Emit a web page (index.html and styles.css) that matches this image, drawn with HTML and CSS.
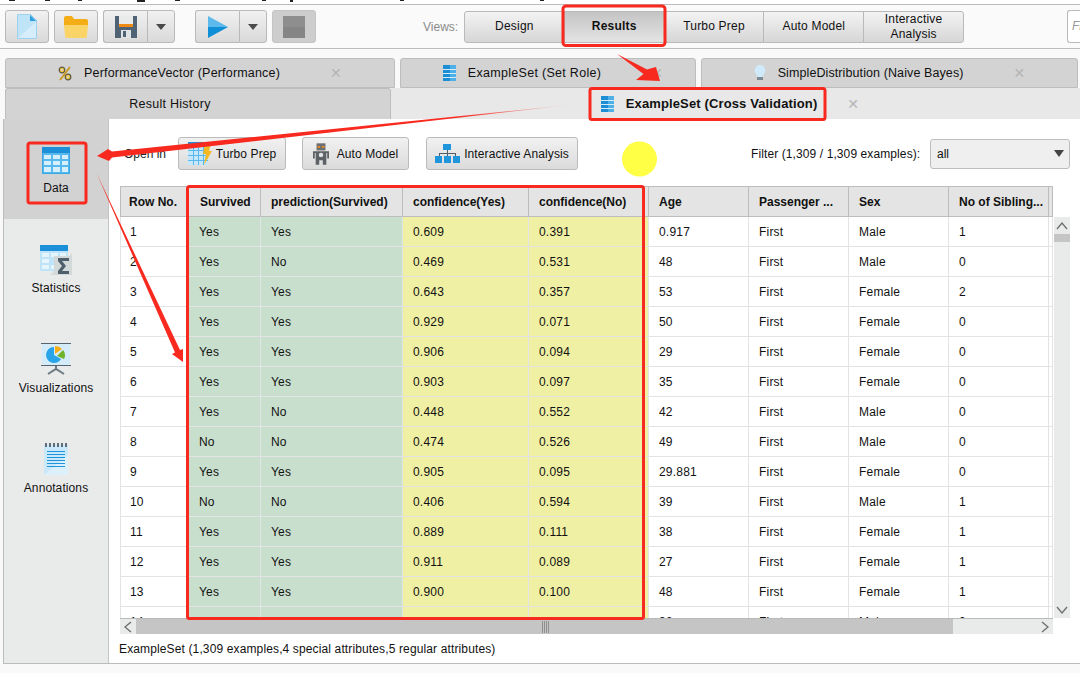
FILE: index.html
```html
<!DOCTYPE html>
<html lang="en">
<head>
<meta charset="utf-8">
<title>Results</title>
<link rel="stylesheet" href="styles.css">
</head>
<body>
<div class="page">
  <div class="menu-strip">
    <svg class="ticks" width="1080" height="2" viewBox="0 0 1080 2"><path d="M9 0h6v1H9zM45 0h5v1h-5zM78 0h4v1h-4zM137 0h8v2h-8zM175 0h5v1h-5zM262 0h4v1h-4zM290 0h3v2h-3zM400 0h4v1h-4zM540 0h4v1h-4z" fill="#222"/></svg>
  </div>
  <header class="toolbar">
    <button class="tool">
      <svg width="20" height="25" viewBox="0 0 20 25"><path d="M0 0h13l7 7v18H0z" fill="#bfe3f7"/><path d="M0 25L20 7v18z" fill="#d6eefb"/><path d="M13 0l7 7h-7z" fill="#2b9fe0"/><path d="M.5.5h12.3l6.7 6.7v17.3H.5z" fill="none" stroke="#9ed1ee"/></svg>
    </button>
    <button class="tool">
      <svg width="24" height="22" viewBox="0 0 24 22"><path d="M0 2a2 2 0 0 1 2-2h6l2 3h12a2 2 0 0 1 2 2v6H0z" fill="#f4ad16"/><path d="M0 9h24l-1 11a2 2 0 0 1-2 2H3a2 2 0 0 1-2-2z" fill="#fbd468"/></svg>
    </button>
    <div class="split">
      <button class="tool main-part">
        <svg width="22" height="22" viewBox="0 0 22 22"><path d="M0 0h22v22H0z" fill="#4f6375"/><path d="M4 0h14v9H4z" fill="#e9eaea"/><path d="M4 8h14v3H4z" fill="#ef8a12"/><path d="M6 14h10v8H6z" fill="#dfe3e5"/><path d="M8 15h3v6H8z" fill="#4f6375"/></svg>
      </button>
      <button class="tool caret-part"><span class="caret"></span></button>
    </div>
    <div class="split run">
      <button class="tool main-part">
        <svg width="20" height="22" viewBox="0 0 20 22"><path d="M0 0l20 11H0z" fill="#5cb9ec"/><path d="M0 22l20-11H0z" fill="#0f8fd8"/></svg>
      </button>
      <button class="tool caret-part"><span class="caret"></span></button>
    </div>
    <button class="tool stop">
      <svg width="22" height="22" viewBox="0 0 22 22"><path d="M0 0h22v11H0z" fill="#8e8e8e"/><path d="M0 11h22v11H0z" fill="#858585"/></svg>
    </button>
    <span class="views-label">Views:</span>
    <nav class="views">
      <button class="view">Design</button>
      <button class="view active">Results</button>
      <button class="view">Turbo Prep</button>
      <button class="view">Auto Model</button>
      <button class="view">Interactive<br>Analysis</button>
    </nav>
    <div class="find">Fi</div>
  </header>

  <div class="tabs-top">
    <div class="tab t1">
      <svg class="tab-icon" width="14" height="15" viewBox="0 0 14 15"><circle cx="4" cy="4" r="2.800" fill="#f0c64a" stroke="#5f5a3c" stroke-width="1.200"/><circle cx="10" cy="11" r="2.800" fill="#f0c64a" stroke="#5f5a3c" stroke-width="1.200"/><circle cx="4" cy="4" r="1" fill="#d3d3d3"/><circle cx="10" cy="11" r="1" fill="#d3d3d3"/><path d="M2 14L12 1" stroke="#c8961a" stroke-width="1.800"/></svg>
      <span>PerformanceVector (Performance)</span>
      <span class="close">✕</span>
    </div>
    <div class="tab t2">
      <svg class="tab-icon" width="13" height="16" viewBox="0 0 13 16"><path d="M0 0h13v16H0z" fill="#1c8ed6"/><path d="M7 0h6v16H7z" fill="#4fb0e8"/><path d="M0 4h13v1H0zM0 8h13v1H0zM0 12h13v1H0z" fill="#d6edf9"/></svg>
      <span>ExampleSet (Set Role)</span>
      <span class="close">✕</span>
    </div>
    <div class="tab t3">
      <svg class="tab-icon" width="12" height="16" viewBox="0 0 12 16"><path d="M6 0a5.500 5.500 0 0 1 3 10v2H3v-2A5.500 5.500 0 0 1 6 0z" fill="#cfeafa"/><path d="M3 12h6v3H3z" fill="#7d8a94"/></svg>
      <span>SimpleDistribution (Naive Bayes)</span>
      <span class="close">✕</span>
    </div>
  </div>
  <div class="tabs-bottom">
    <div class="tab history"><span>Result History</span></div>
    <div class="tab current">
      <svg class="tab-icon" width="13" height="16" viewBox="0 0 13 16"><path d="M0 0h13v16H0z" fill="#1c8ed6"/><path d="M7 0h6v16H7z" fill="#4fb0e8"/><path d="M0 4h13v1H0zM0 8h13v1H0zM0 12h13v1H0z" fill="#d6edf9"/></svg>
      <span class="current-title">ExampleSet (Cross Validation)</span>
      <span class="close">✕</span>
    </div>
  </div>

  <div class="panel">
    <aside class="side">
      <div class="side-item selected">
        <svg width="28" height="28" viewBox="0 0 28 28"><path d="M0 0h28v27H0z" fill="#58b9ee"/><path d="M0 0h28v6H0z" fill="#1b90d8"/><path d="M2 8h7v4H2zM11 8h7v4h-7zM20 8h6v4h-6zM2 14h7v4H2zM11 14h7v4h-7zM20 14h6v4h-6zM2 20h7v5H2zM11 20h7v5h-7zM20 20h6v5h-6z" fill="#d6effc"/><path d="M0 6h1v21H0zM27 6h1v21h-1zM0 26h28v1H0z" fill="#37a7e6"/></svg>
        <span>Data</span>
      </div>
      <div class="side-item">
        <svg width="32" height="30" viewBox="0 0 32 30"><path d="M0 0h28v26H0z" fill="#bfe4f8"/><path d="M0 0h28v6H0z" fill="#1b90d8"/><path d="M2 8h7v4H2zM11 8h7v4h-7zM20 8h6v4h-6zM2 14h7v4H2zM2 20h7v4H2zM11 20h5v4h-5z" fill="#e6f5fd"/><path d="M10 30l22-22v22z" fill="#d8dcdc"/><path d="M14 11h18v19H14z" fill="#d3d8d9"/><path d="M18 13h11v3h-7l4 5-4 5h7v3H18v-3l4-5-4-5z" fill="#4f5f6c"/></svg>
        <span>Statistics</span>
      </div>
      <div class="side-item">
        <svg width="30" height="32" viewBox="0 0 30 32"><path d="M1 1h28v22H1z" fill="#d4ecfa"/><path d="M0 0h30v1H0zM0 22h30v1H0z" fill="#55646f"/><path d="M13 4a8 8 0 1 0 7 12l-7-4z" fill="#29a4e8"/><path d="M14 3a9 9 0 0 1 7 3l-7 5z" fill="#f4ad16"/><path d="M22 7a8 8 0 0 1 1 9l-7-3z" fill="#6fb32b"/><path d="M14 23h2v4h-2z" fill="#6b7880"/><path d="M7 31l8-5 8 5" fill="none" stroke="#6b7880" stroke-width="2"/></svg>
        <span>Visualizations</span>
      </div>
      <div class="side-item">
        <svg width="24" height="32" viewBox="0 0 24 32"><path d="M0 2h24v30H0z" fill="#c9e8fa"/><path d="M0 32L24 12v20z" fill="#dcf1fc"/><path d="M1 0h2v4H1zM5 0h2v4H5zM9 0h2v4H9zM13 0h2v4h-2zM17 0h2v4h-2zM21 0h2v4h-2z" fill="#5f6d78"/><path d="M3 8h18v1H3zM3 11h18v1H3zM3 14h18v1H3zM3 17h18v1H3zM3 20h18v1H3zM3 23h18v1H3z" fill="#1f95dc"/></svg>
        <span>Annotations</span>
      </div>
    </aside>

    <main class="content">
      <div class="actions">
        <span class="open-in">Open in</span>
        <button class="action a-turbo">
          <svg width="24" height="23" viewBox="0 0 24 23"><path d="M0 0h20v23H0z" fill="#c6e7fa"/><path d="M0 0h20v3H0z" fill="#1b90d8"/><path d="M0 8h20v1H0zM0 13h20v1H0zM0 18h20v1H0zM5 3h1v20H5zM10 3h1v20h-1zM15 3h1v20h-1z" fill="#5ab8ec"/><path d="M17 1h6l-2 8h3L16 23l2-11h-3z" fill="#f4b822"/></svg>
          <span>Turbo Prep</span>
        </button>
        <button class="action a-auto">
          <svg width="16" height="24" viewBox="0 0 18 24"><path d="M4 0h10v8H4z" fill="#6b6f73"/><path d="M5 3h3v2H5zM10 3h3v2h-3z" fill="#e98a1d"/><path d="M0 9h18v8h-2v-6h-1v13h-4v-5H7v5H3V11H2v6H0z" fill="#5e6266"/><circle cx="9" cy="13" r="2.500" fill="#e2e6e8"/></svg>
          <span>Auto Model</span>
        </button>
        <button class="action a-inter">
          <svg width="25" height="19" viewBox="0 0 25 19"><path d="M8 0h8v6H8zM0 12h7v7H0zM9 12h7v7H9zM18 12h7v7h-7z" fill="#1f95dc"/><path d="M12 6h1v3h8v3h-1v-2h-7v2h-1v-2H5v2H4V9h8z" fill="#4f5f6c"/></svg>
          <span>Interactive Analysis</span>
        </button>
        <span class="filter-label">Filter (1,309 / 1,309 examples):</span>
        <div class="select"><span>all</span><span class="select-caret"></span></div>
      </div>

      <div class="grid-area">
        <div class="grid-col">
          <div class="grid-clip">
            <table class="data">
              <colgroup>
                <col class="c-row"><col class="c-sur"><col class="c-pre"><col class="c-yes"><col class="c-no"><col class="c-std"><col class="c-std"><col class="c-std"><col class="c-std"><col class="c-end">
              </colgroup>
              <thead>
                <tr><th>Row No.</th><th class="pad-s">Survived</th><th>prediction(Survived)</th><th>confidence(Yes)</th><th>confidence(No)</th><th>Age</th><th>Passenger ...</th><th>Sex</th><th>No of Sibling...</th><th></th></tr>
              </thead>
              <tbody>
                <tr><td>1</td><td class="g pad-s">Yes</td><td class="g">Yes</td><td class="y">0.609</td><td class="y">0.391</td><td>0.917</td><td>First</td><td>Male</td><td>1</td><td></td></tr>
                <tr><td>2</td><td class="g pad-s">Yes</td><td class="g">No</td><td class="y">0.469</td><td class="y">0.531</td><td>48</td><td>First</td><td>Male</td><td>0</td><td></td></tr>
                <tr><td>3</td><td class="g pad-s">Yes</td><td class="g">Yes</td><td class="y">0.643</td><td class="y">0.357</td><td>53</td><td>First</td><td>Female</td><td>2</td><td></td></tr>
                <tr><td>4</td><td class="g pad-s">Yes</td><td class="g">Yes</td><td class="y">0.929</td><td class="y">0.071</td><td>50</td><td>First</td><td>Female</td><td>0</td><td></td></tr>
                <tr><td>5</td><td class="g pad-s">Yes</td><td class="g">Yes</td><td class="y">0.906</td><td class="y">0.094</td><td>29</td><td>First</td><td>Female</td><td>0</td><td></td></tr>
                <tr><td>6</td><td class="g pad-s">Yes</td><td class="g">Yes</td><td class="y">0.903</td><td class="y">0.097</td><td>35</td><td>First</td><td>Female</td><td>0</td><td></td></tr>
                <tr><td>7</td><td class="g pad-s">Yes</td><td class="g">No</td><td class="y">0.448</td><td class="y">0.552</td><td>42</td><td>First</td><td>Male</td><td>0</td><td></td></tr>
                <tr><td>8</td><td class="g pad-s">No</td><td class="g">No</td><td class="y">0.474</td><td class="y">0.526</td><td>49</td><td>First</td><td>Male</td><td>0</td><td></td></tr>
                <tr><td>9</td><td class="g pad-s">Yes</td><td class="g">Yes</td><td class="y">0.905</td><td class="y">0.095</td><td>29.881</td><td>First</td><td>Female</td><td>0</td><td></td></tr>
                <tr><td>10</td><td class="g pad-s">No</td><td class="g">No</td><td class="y">0.406</td><td class="y">0.594</td><td>39</td><td>First</td><td>Male</td><td>1</td><td></td></tr>
                <tr><td>11</td><td class="g pad-s">Yes</td><td class="g">Yes</td><td class="y">0.889</td><td class="y">0.111</td><td>38</td><td>First</td><td>Female</td><td>1</td><td></td></tr>
                <tr><td>12</td><td class="g pad-s">Yes</td><td class="g">Yes</td><td class="y">0.911</td><td class="y">0.089</td><td>27</td><td>First</td><td>Female</td><td>1</td><td></td></tr>
                <tr><td>13</td><td class="g pad-s">Yes</td><td class="g">Yes</td><td class="y">0.900</td><td class="y">0.100</td><td>48</td><td>First</td><td>Female</td><td>1</td><td></td></tr>
                <tr><td>14</td><td class="g pad-s">Yes</td><td class="g">Yes</td><td class="y">0.445</td><td class="y">0.555</td><td>36</td><td>First</td><td>Male</td><td>0</td><td></td></tr>
              </tbody>
            </table>
          </div>
          <div class="hscroll">
            <span class="sb-btn"><svg width="10" height="12" viewBox="0 0 10 12"><path d="M8 1L2 6l6 5" fill="none" stroke="#6d6d6d" stroke-width="1.300"/></svg></span>
            <span class="h-thumb"><span class="grip"></span></span>
            <span class="h-track"></span>
            <span class="sb-btn"><svg width="10" height="12" viewBox="0 0 10 12"><path d="M2 1l6 5-6 5" fill="none" stroke="#6d6d6d" stroke-width="1.300"/></svg></span>
          </div>
        </div>
        <div class="vscroll">
          <span class="v-btn"><svg width="12" height="10" viewBox="0 0 12 10"><path d="M1 8l5-6 5 6" fill="none" stroke="#6d6d6d" stroke-width="1.300"/></svg></span>
          <span class="v-thumb"></span>
          <span class="v-track"></span>
          <span class="v-btn"><svg width="12" height="10" viewBox="0 0 12 10"><path d="M1 2l5 6 5-6" fill="none" stroke="#6d6d6d" stroke-width="1.300"/></svg></span>
        </div>
      </div>
      <div class="status">ExampleSet (1,309 examples,4 special attributes,5 regular attributes)</div>
    </main>
  </div>

  <svg class="marks" width="1080" height="673" viewBox="0 0 1080 673">
    <defs>
      <linearGradient id="fade" gradientUnits="userSpaceOnUse" x1="97" y1="156" x2="578" y2="104">
        <stop offset="0" stop-color="#f8291e"/><stop offset=".75" stop-color="#f8291e"/><stop offset="1" stop-color="#f8291e" stop-opacity="0"/>
      </linearGradient>
    </defs>
    <circle class="dot" cx="639.500" cy="159" r="17.500"/>
    <rect class="box" x="563" y="6" width="102" height="39.500" rx="3"/>
    <rect class="box" x="590" y="88.500" width="235" height="31" rx="2"/>
    <rect class="box" x="28" y="143" width="58" height="60" rx="2"/>
    <rect class="box" x="187.500" y="186.500" width="456" height="432" rx="2"/>
    <path class="arrow" d="M617 54L647 69.500 656 67 660 81 636 80 643.500 74z"/>
    <path d="M578 104L112 151.500 108 149 97 156 109 161 112 157.500z" fill="url(#fade)"/>
    <path class="arrow" d="M96.500 173L180 350 183 349 183 362 172 354 175 352.500z"/>
  </svg>
</div>
</body>
</html>
```
FILE: styles.css
```css
* { box-sizing: border-box; }
html, body { margin: 0; padding: 0; }
body {
  width: 1080px;
  height: 673px;
  overflow: hidden;
  background: #f9f9f9;
  font-family: "Liberation Sans", Arial, sans-serif;
  font-size: 12px;
  color: #111;
}
button { font: inherit; color: inherit; margin: 0; padding: 0; }
svg { display: block; }

.page { position: relative; width: 1080px; height: 673px; overflow: hidden; }

.menu-strip { height: 5px; background: #fff; border-bottom: 1px solid #bcbcbc; }

.toolbar {
  height: 44px;
  display: flex;
  align-items: center;
  padding: 0 0 0 5px;
  background: #fafafa;
  border-bottom: 1px solid #bcbcbc;
}
.tool {
  height: 33px;
  width: 44px;
  flex: none;
  display: flex;
  align-items: center;
  justify-content: center;
  margin-right: 5px;
  background: linear-gradient(#f1f1f1, #d9d9d9);
  border: 1px solid #b9b9b9;
  border-radius: 3px;
}
.split { display: flex; flex: none; width: 72px; }
.split .tool { margin: 0; }
.split .main-part { width: 44px; border-radius: 3px 0 0 3px; border-right: 0; }
.split .caret-part { width: 28px; border-radius: 0 3px 3px 0; }
.split.run { margin-left: 20px; margin-right: 5px; }
.caret { width: 0; height: 0; border-left: 5px solid transparent; border-right: 5px solid transparent; border-top: 6px solid #4a4a4a; }
.tool.stop { background: #cdcdcd; border-color: #c4c4c4; margin-right: 0; }

.views-label { flex: none; margin-left: 107px; width: 41px; color: #8a8a8a; }
.views { display: flex; flex: none; height: 32px; width: 500px; border: 1px solid #b9b9b9; border-radius: 3px; background: linear-gradient(#f3f3f3, #d6d6d6); }
.view { flex: 1 1 0; background: none; border: 0; border-right: 1px solid #b9b9b9; line-height: 15px; letter-spacing: .2px; }
.view:last-child { border-right: 0; }
.view.active { font-weight: bold; background: linear-gradient(#c4c4c4, #e4e4e4); }
.find { margin-left: 103px; flex: 1; min-width: 0; height: 33px; padding: 8px 0 0 4px; background: #fff; border: 1px solid #b9b9b9; border-right: 0; border-radius: 3px 0 0 3px; color: #999; font-style: italic; }

.tabs-top { display: flex; gap: 5px; height: 30px; margin-top: 9px; padding: 0 2px 0 5px; }
.tabs-bottom { display: flex; height: 31px; padding-left: 5px; }
.tab {
  display: flex;
  align-items: center;
  justify-content: center;
  background: #d3d3d3;
  border: 1px solid #bdbdbd;
  border-radius: 3px 3px 0 0;
  font-size: 12.500px;
  letter-spacing: .18px;
}
.tab.t1 { width: 390px; }
.tab.t2 { width: 296px; padding-left: 10px; letter-spacing: .3px; }
.tab.t3 { flex: 1; letter-spacing: .1px; }
.tab-icon { margin-right: 12px; }
.close { margin-left: 50px; color: #b4b4b4; font-size: 14px; line-height: 1; font-family: "DejaVu Sans", sans-serif; }
.tab.history { width: 386px; padding-right: 56px; border-bottom: 0; letter-spacing: .25px; }
.tab.current { flex: 1; padding-right: 11px; background: #e8e8e8; border: 0; border-radius: 0; }
.current-title { font-weight: bold; letter-spacing: .13px; font-size: 13px; }
.tab.current .close { margin-left: 30px; }

.panel { display: flex; height: 545px; margin-left: 3px; border: solid #bcbcbc; border-width: 0 0 1px 1px; background: #fff; }
.side { width: 105px; background: #e9eaea; border-right: 1px solid #c4c4c4; border-radius: 3px 0 0 0; }
.side-item { height: 100px; display: flex; flex-direction: column; align-items: center; justify-content: flex-end; padding-bottom: 24px; gap: 6px; letter-spacing: .1px; }
.side-item span { line-height: 14px; }
.side-item.selected { background: #d1d2d1; }

.content { flex: 1; display: flex; flex-direction: column; padding-left: 11px; }
.actions { display: flex; align-items: center; height: 67px; padding-top: 2px; }
.open-in { width: 54px; margin-left: 4px; color: #222; }
.action { height: 33px; display: flex; align-items: center; justify-content: center; gap: 4px; background: linear-gradient(#f1f1f1, #dbdbdb); border: 1px solid #bbb; border-radius: 3px; letter-spacing: .1px; }
.a-turbo { width: 108px; margin-right: 16px; }
.a-auto { width: 107px; gap: 8px; margin-right: 17px; }
.a-inter { width: 152px; }
.filter-label { margin-left: 173px; width: 179px; letter-spacing: .1px; }
.select { width: 140px; height: 30px; display: flex; align-items: center; justify-content: space-between; padding: 0 5px 0 6px; background: #efefef; border: 1px solid #bdbdbd; border-radius: 3px; }
.select-caret { width: 0; height: 0; border-left: 5px solid transparent; border-right: 5px solid transparent; border-top: 7px solid #444; }

.grid-area { display: flex; height: 448px; }
.grid-col { width: 933px; display: flex; flex-direction: column; }
.grid-clip { height: 433px; overflow: hidden; border-bottom: 1px solid #b9b9b9; }
.data { width: 933px; table-layout: fixed; border-collapse: separate; border-spacing: 0; }
.c-row { width: 67px; }
.c-sur { width: 74px; }
.c-pre { width: 142px; }
.c-yes { width: 126px; }
.c-no { width: 120px; }
.c-std { width: 100px; }
.c-end { width: 4px; }
.data th {
  height: 31px;
  padding: 0 0 0 10px;
  text-align: left;
  white-space: nowrap;
  overflow: hidden;
  background: #e3e4e3;
  border-top: 1px solid #bdbdbd;
  border-right: 1px solid #bdbdbd;
  border-bottom: 1px solid #bdbdbd;
}
.data th:first-child { border-left: 1px solid #bdbdbd; padding-left: 8px; }
.data th.pad-s { padding-left: 13px; }
.data td {
  height: 30px;
  padding: 0 0 0 10px;
  white-space: nowrap;
  background: #fff;
  letter-spacing: .2px;
  border-right: 1px solid #e3e3e3;
  border-bottom: 1px solid #e3e3e3;
}
.data td:first-child { border-left: 1px solid #e3e3e3; padding-left: 9px; }
.data td.pad-s { padding-left: 12px; }
.data td.g { background: #c9dfce; }
.data td.y { background: #f0f0a4; }

.hscroll { height: 15px; display: flex; }
.sb-btn { width: 16px; display: flex; align-items: center; justify-content: center; background: #e9eaea; }
.h-thumb { width: 817px; display: flex; align-items: center; justify-content: center; background: #c4c5c4; }
.grip { width: 7px; height: 12px; background: repeating-linear-gradient(90deg, #8f8f8f 0 1px, #c4c5c4 1px 2px); margin-left: 2px; }
.h-track { flex: 1; background: #e9eaea; }

.vscroll { width: 16px; margin-left: 1px; margin-top: 31px; height: 401px; display: flex; flex-direction: column; background: #e9eaea; }
.v-btn { height: 17px; display: flex; align-items: center; justify-content: center; }
.v-thumb { height: 8px; background: #c4c5c4; }
.v-track { flex: 1; }

.status { padding-top: 8px; margin-left: -1px; letter-spacing: .13px; }

.marks { position: absolute; left: 0; top: 0; pointer-events: none; }
.dot { fill: #ffff45; }
.box { fill: none; stroke: #f8291e; stroke-width: 3; }
.arrow { fill: #f8291e; }
```
